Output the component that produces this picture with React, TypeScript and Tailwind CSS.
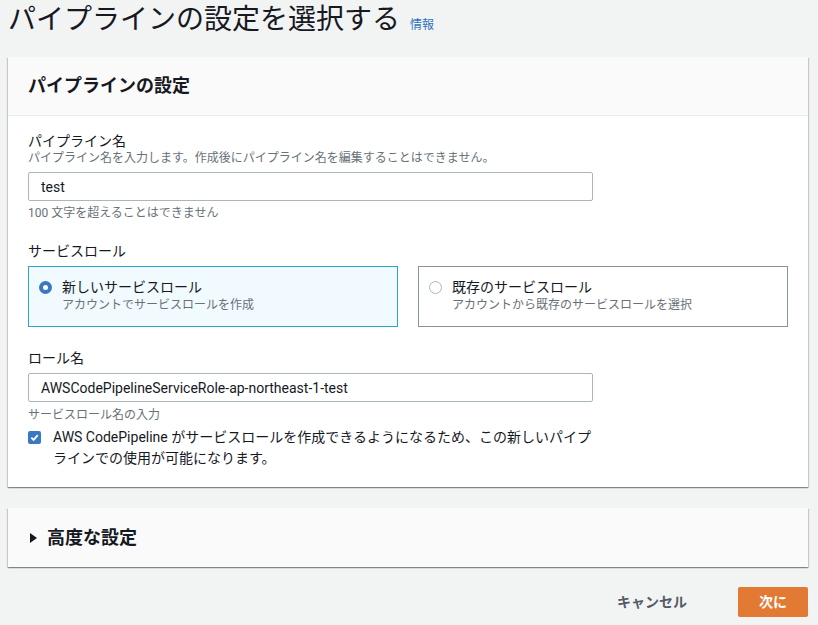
import { useState } from "react";

const font = "font-['Roboto','Noto_Sans_CJK_JP',sans-serif]";
const cardShadow =
  "shadow-[0_1px_1px_0_rgba(0,28,36,0.3),1px_1px_1px_0_rgba(0,28,36,0.15),-1px_1px_1px_0_rgba(0,28,36,0.15)]";

function RadioTile({
  selected,
  title,
  desc,
  onClick,
}: {
  selected: boolean;
  title: string;
  desc: string;
  onClick: () => void;
}) {
  return (
    <div
      onClick={onClick}
      className={`flex h-[61px] flex-1 cursor-pointer gap-[10px] border pt-[10px] pl-[10px] ${
        selected ? "border-[#2ea3cc] bg-[#f1faff]" : "border-[#879596] bg-white"
      }`}
    >
      <span
        className={`mt-[4px] size-[13px] shrink-0 rounded-full ${
          selected ? "border-[4px] border-[#3a78c2] bg-white" : "border border-[#aab7b8] bg-white"
        }`}
      />
      <div>
        <div className="text-[14px] leading-5 text-[#16191f]">{title}</div>
        <div className="text-[12px] leading-4 text-[#687078]">{desc}</div>
      </div>
    </div>
  );
}

export default function App() {
  const [role, setRole] = useState<"new" | "existing">("new");
  const [name, setName] = useState("test");
  const [roleName, setRoleName] = useState("AWSCodePipelineServiceRole-ap-northeast-1-test");
  const [allow, setAllow] = useState(true);

  return (
    <div className={`min-h-[625px] bg-[#f2f3f3] pl-2 pr-[10px] text-[#16191f] ${font}`}>
      <div className="flex items-baseline gap-[10px]">
        <h1 className="text-[28px] leading-[40px] font-normal">パイプラインの設定を選択する</h1>
        <a className="text-[12px] text-[#2f74c0]">情報</a>
      </div>

      <div className={`mt-[17px] bg-white ${cardShadow}`}>
        <div className="border-b border-[#eaeded] bg-[#fafafa] px-5 py-[17px]">
          <h2 className="text-[18px] leading-6 font-bold">パイプラインの設定</h2>
        </div>

        <div className="px-5 pt-4 pb-[18px]">
          <div className="text-[14px] leading-[18px]">パイプライン名</div>
          <div className="text-[12px] leading-4 text-[#687078]">
            パイプライン名を入力します。作成後にパイプライン名を編集することはできません。
          </div>
          <input
            value={name}
            onChange={(e) => setName(e.target.value)}
            className="mt-1.5 h-[29px] w-[565px] rounded-[2px] border border-[#aab7b8] bg-white px-3 text-[14px] outline-none"
          />
          <div className="mt-1 text-[12px] leading-4 text-[#687078]">100 文字を超えることはできません</div>

          <div className="mt-5 text-[14px] leading-5">サービスロール</div>
          <div className="mt-[5px] flex gap-5">
            <RadioTile
              selected={role === "new"}
              title="新しいサービスロール"
              desc="アカウントでサービスロールを作成"
              onClick={() => setRole("new")}
            />
            <RadioTile
              selected={role === "existing"}
              title="既存のサービスロール"
              desc="アカウントから既存のサービスロールを選択"
              onClick={() => setRole("existing")}
            />
          </div>

          <div className="mt-[21px] text-[14px] leading-5">ロール名</div>
          <input
            value={roleName}
            onChange={(e) => setRoleName(e.target.value)}
            className="mt-[5px] h-[29px] w-[565px] rounded-[2px] border border-[#aab7b8] bg-white px-3 text-[14px] outline-none"
          />
          <div className="mt-[5px] text-[12px] leading-4 text-[#687078]">サービスロール名の入力</div>

          <label className="mt-1 flex w-[565px] cursor-pointer gap-3">
            <span
              onClick={() => setAllow(!allow)}
              className={`mt-[4px] flex size-[13px] shrink-0 items-center justify-center rounded-[2px] ${
                allow ? "bg-[#3a78c2]" : "border border-[#aab7b8] bg-white"
              }`}
            >
              {allow && (
                <svg width="9" height="9" viewBox="0 0 10 10">
                  <path d="M1.5 5.2 4 7.6 8.6 2.4" fill="none" stroke="white" strokeWidth="2" />
                </svg>
              )}
            </span>
            <span className="text-[14px] leading-[21px]">
              AWS CodePipeline がサービスロールを作成できるようになるため、この新しいパイプラインでの使用が可能になります。
            </span>
          </label>
        </div>
      </div>

      <div className={`mt-[21px] flex h-[59px] items-center gap-[10px] bg-[#fafafa] pl-[22px] ${cardShadow}`}>
        <svg width="7" height="10" viewBox="0 0 7 10">
          <path d="M0 0 7 5 0 10Z" fill="#16191f" />
        </svg>
        <h2 className="text-[18px] leading-6 font-bold">高度な設定</h2>
      </div>

      <div className="mt-5 flex items-center justify-end">
        <button className="px-5 text-[14px] font-bold text-[#545b64]">キャンセル</button>
        <button className="ml-[31px] h-[30px] w-[70px] rounded-[2px] bg-[#e27a33] text-[14px] font-bold text-white">
          次に
        </button>
      </div>
    </div>
  );
}
